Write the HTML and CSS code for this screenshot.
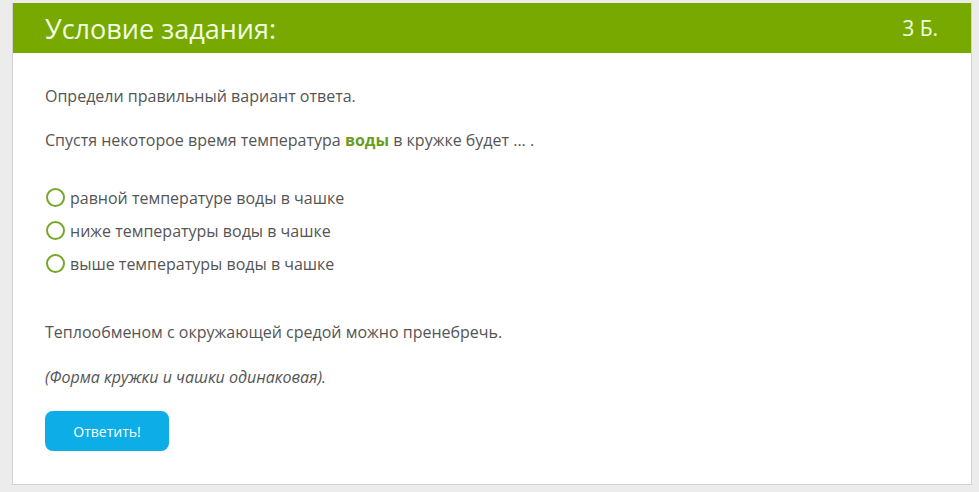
FILE: index.html
```html
<!DOCTYPE html>
<html lang="ru">
<head>
  <meta charset="UTF-8" />
  <title>Условие задания</title>
  <link rel="stylesheet" href="styles.css">
</head>
<body>
  <div class="task">
    <div class="task-head">
      <span class="task-title">Условие задания:</span>
      <span class="task-points">3 Б.</span>
    </div>
    <div class="task-body">
      <p>Определи правильный вариант ответа.</p>
      <p>Спустя некоторое время температура <b class="hl">воды</b> в кружке будет ... .</p>

      <div class="options">
        <label class="option"><span class="radio"></span>равной температуре воды в чашке</label>
        <label class="option"><span class="radio"></span>ниже температуры воды в чашке</label>
        <label class="option"><span class="radio"></span>выше температуры воды в чашке</label>
      </div>

      <p>Теплообменом с окружающей средой можно пренебречь.</p>
      <p class="note">(Форма кружки и чашки одинаковая).</p>

      <button class="answer-btn">Ответить!</button>
    </div>
  </div>
</body>
</html>
```

FILE: styles.css
```css
body {
  margin: 0;
  padding: 3px 7px 0 12px;
  background: #ececec;
  font-family: 'Open Sans', 'Noto Sans', sans-serif;
  color: #555;
}

.task {
  background: #fff;
  border: 1px solid #d2d2d2;
  border-top: none;
}

.task-head {
  background: #77a900;
  color: #f2ffe0;
  height: 50px;
  display: flex;
  align-items: center;
  justify-content: space-between;
  padding: 0 33px 0 32px;
}

.task-title {
  font-size: 27px;
}

.task-points {
  font-size: 21px;
}

.task-body {
  padding: 32px 32px 33px;
}

.task-body p {
  margin: 0 0 22px;
  font-size: 16px;
  line-height: 22px;
}

.hl {
  color: #6b9d1e;
  font-weight: 700;
}

.options {
  margin: 30px 0 41px;
}

.option {
  display: flex;
  align-items: center;
  height: 33px;
  font-size: 16px;
}

.radio {
  width: 15px;
  height: 15px;
  border: 2px solid #76a82a;
  border-radius: 50%;
  margin: 0 5px 0 1px;
}

.task-body p.note {
  font-style: italic;
  margin-top: 23px;
  margin-bottom: 23px;
}

.answer-btn {
  display: block;
  width: 124px;
  height: 40px;
  border: none;
  border-radius: 8px;
  background: #0daee8;
  color: #fff;
  font-family: 'Open Sans', 'Noto Sans', sans-serif;
  font-size: 14px;
  cursor: pointer;
}
```
